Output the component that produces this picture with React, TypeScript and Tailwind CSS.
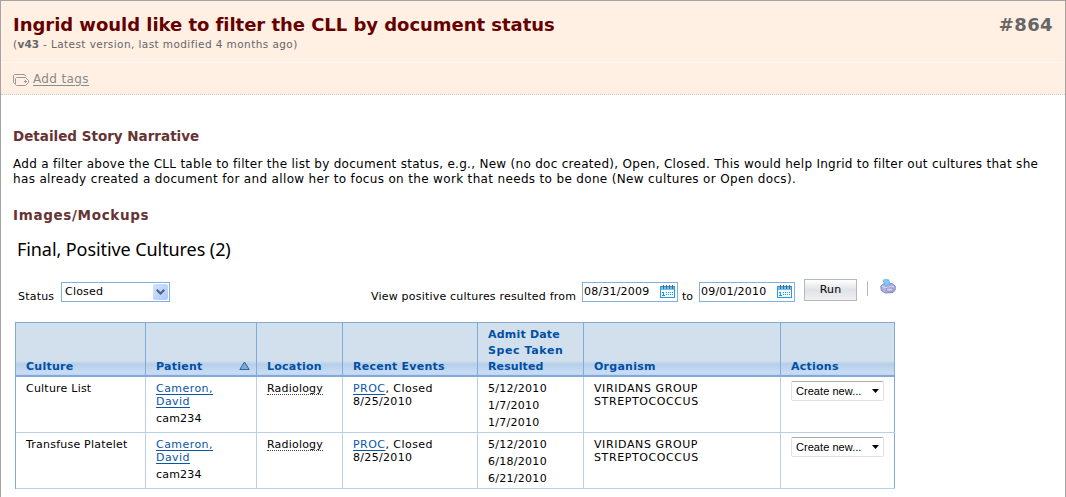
import React from "react";

const link = "tracking-[0.45px] text-[#0b55a8] underline underline-offset-2";

function TagIcon() {
  return (
    <svg width="16" height="12" viewBox="0 0 16 12" fill="none" stroke="#999" strokeWidth="1">
      <path d="M2.5 9.5h-1l-1-1v-7l1-1h10l1.5 2" />
      <path d="M3.5 3.5h9l3 3v2l-3 3h-9l-1-1v-6z" />
      <path d="M11 7.5h3M12.5 6v3" />
    </svg>
  );
}

function CalendarIcon() {
  return (
    <svg className="-mt-[2px]" width="15" height="13" viewBox="0 0 15 13" shapeRendering="crispEdges">
      <rect x="0" y="1" width="15" height="12" fill="#2f96de" />
      <rect x="1" y="2" width="13" height="3" fill="#6cc2f4" />
      <rect x="1" y="5" width="13" height="7" fill="#f2faff" />
      <path d="M3.5 0v4M6.5 0v4M9.5 0v4M12.5 0v4" stroke="#5a6470" />
      <path d="M2 7.5h2M3.5 7v4M2 10.5h3" stroke="#2693dd" />
      <path d="M6 7.5h7M6 9.5h7" stroke="#2693dd" strokeDasharray="1 1" />
    </svg>
  );
}

function PrinterIcon() {
  return (
    <svg width="16" height="15" viewBox="0 0 16 15">
      <path d="M.8 7l2.700-2.200 8.500-.3 3.200 2.500v4l-2.200 2.500-7.500.5-4.200-2.500z" fill="#b5b3e2" stroke="#7a77b3" strokeWidth=".9" />
      <path d="M3 1.500l1.500-1L8.700.800l1.500 5-4.700.900z" fill="#7fc8f8" stroke="#68a9e0" strokeWidth=".8" />
      <path d="M2 7.200l4 1.600 8-1.300" fill="none" stroke="#dddcf4" />
      <rect x="6.500" y="9" width="6.500" height="3.200" rx="1" fill="#d3d2f0" stroke="#7f7cb8" strokeWidth=".8" />
    </svg>
  );
}

function DateField({ value }: { value: string }) {
  return (
    <div className="flex h-5 w-24 items-center justify-between border border-[#7fb0e3] pr-[2px] pl-px">
      <span className="tracking-[0.2px]">{value}</span>
      <CalendarIcon />
    </div>
  );
}

const heads = ["Culture", "Patient", "Location", "Recent Events", "", "Organism", "Actions"];
const rows = [
  { culture: "Culture List", dates: ["5/12/2010", "1/7/2010", "1/7/2010"] },
  { culture: "Transfuse Platelet", dates: ["5/12/2010", "6/18/2010", "6/21/2010"] },
];
const grid = "grid grid-cols-[130px_111px_86px_135px_106px_197px_114px]";
const cell = "border-r border-[#b8d0e8] pt-[5px] pl-[10px] last:border-[#84a9d6]";

export default function App() {
  return (
    <div className="h-[497px] w-[1066px] overflow-hidden border-x border-t border-[#a5a3a3] bg-white font-['DejaVu_Sans',sans-serif] text-[11px] text-black">
      <header className="bg-[#fff0e3]">
        <div className="flex h-[61px] justify-between pt-[12px] pr-[12px] pl-[12px]">
          <div>
            <h1 className="text-[18px] leading-6 font-bold tracking-[-0.035px] whitespace-nowrap text-[#660000]">Ingrid would like to filter the CLL by document status</h1>
            <p className="mt-[1px] text-[10.5px] leading-[13px] tracking-[0.41px] whitespace-nowrap text-[#666]">(<b className="tracking-[0.1px]">v43</b> - Latest version, last modified 4 months ago)</p>
          </div>
          <span className="text-[18px] leading-6 font-bold tracking-[0.4px] text-[#666]">#864</span>
        </div>
        <div className="flex h-[33px] items-center gap-1 border-y border-dotted border-t-white border-b-[#ccc] pl-[12px] text-[12px] text-[#8a8a8a]">
          <span className="mt-[3px]"><TagIcon /></span>
          <span className="tracking-[0.37px] underline underline-offset-2">Add tags</span>
        </div>
      </header>
      <main className="px-3">
        <h2 className="mt-[32px] text-[13.5px] leading-[18px] font-bold text-[#663333]">Detailed Story Narrative</h2>
        <div className="mt-[12px] text-[12px] leading-[15px] whitespace-nowrap">
          <p className="tracking-[0.287px]">Add a filter above the CLL table to filter the list by document status, e.g., New (no doc created), Open, Closed. This would help Ingrid to filter out cultures that she</p>
          <p className="tracking-[0.338px]">has already created a document for and allow her to focus on the work that needs to be done (New cultures or Open docs).</p>
        </div>
        <h2 className="mt-[19px] text-[13.5px] leading-[18px] font-bold tracking-[0.66px] text-[#663333]">Images/Mockups</h2>
        <h3 className="mt-[13px] pl-1 font-['Noto_Sans',sans-serif] text-[18px] leading-6 tracking-[-0.08px]">Final, Positive Cultures (2)</h3>

        <div className="mt-[17px] flex h-6 items-start pl-[5px]">
          <span className="mt-[12px] w-[43px] leading-[14px] tracking-[0.2px]">Status</span>
          <div className="mt-[4px] flex h-5 w-[109px] items-center justify-between border border-[#7fb0e3] pr-px pl-[3px]">
            <span className="mt-px tracking-[0.2px]">Closed</span>
            <span className="flex h-4 w-[15px] items-center justify-center rounded-[2px] bg-linear-to-br from-[#d2e0fe] to-[#b0c8f7]">
              <svg width="9" height="6" viewBox="0 0 9 6" fill="none" stroke="#4d6185" strokeWidth="2"><path d="M.7.700l3.800 3.800L8.300.700" /></svg>
            </span>
          </div>
          <span className="mt-[12px] ml-[201px] w-[211px] leading-[14px] tracking-[0.2px] whitespace-nowrap">View positive cultures resulted from</span>
          <div className="mt-[4px]"><DateField value="08/31/2009" /></div>
          <span className="mt-[12px] ml-1 w-[17px] leading-[14px]">to</span>
          <div className="mt-[4px]"><DateField value="09/01/2010" /></div>
          <button className="mt-px ml-[9px] h-[22px] w-[53px] border border-[#b8b8b8] bg-linear-to-b from-white via-[#dfe2e8] to-[#f0f1f3] tracking-[0.2px]">Run</button>
          <span className="mt-[3px] ml-[10px] h-[15px] w-px bg-[#bbb8bd]" />
          <span className="mt-px ml-[12px]"><PrinterIcon /></span>
        </div>

        <div className="mt-[20px] ml-[2px] w-[880px] border-t border-l border-[#84a9d6] leading-[13px]">
          <div className={`${grid} h-[54px] border-b-2 border-[#84a9d6] bg-[linear-gradient(to_bottom,#d2dfec_0,#d2dfec_38px,#b6cfe9_41px,#c9dcf5_50px,#b0c8e8_54px)] font-bold text-[#004fa5]`}>
            {heads.map((h, i) => (
              <div key={i} className="flex items-end justify-between border-r border-[#84a9d6] pr-[6px] pl-[10px] leading-4">
                {i === 4 ? (
                  <span className="whitespace-nowrap">
                    <span className="tracking-[0.2px]">Admit Date</span><br />
                    <span className="tracking-[0.6px]">Spec Taken</span><br />
                    <span className="tracking-[0.1px]">Resulted</span>
                  </span>
                ) : (
                  <span className="tracking-[0.25px] whitespace-nowrap">{h}</span>
                )}
                {i === 1 && <svg className="mb-[5px]" width="11" height="9" viewBox="0 0 11 9"><path d="M5.500 1L10.200 8.500H.800z" fill="#7fa9cf" stroke="#2b66a5" /></svg>}
              </div>
            ))}
          </div>
          {rows.map((r) => (
            <div key={r.culture} className={`${grid} h-14 border-b border-[#b8d0e8]`}>
              <div className={`${cell} tracking-[0.22px]`}>{r.culture}</div>
              <div className={cell}><span className={link}>Cameron,</span><br /><span className={link}>David</span><div className="mt-1 tracking-[0.2px]">cam234</div></div>
              <div className={cell}><span className="inline-block h-[13px] border-b border-dotted border-[#444] tracking-[0.2px]">Radiology</span></div>
              <div className={cell}><span className={link}>PROC</span><span className="tracking-[0.45px]">, Closed</span><br /><span className="tracking-[0.32px]">8/25/2010</span></div>
              <div className={`${cell} leading-[17px] tracking-[0.28px]`}><div className="-mt-[2px]">{r.dates.map((d, i) => <div key={i}>{d}</div>)}</div></div>
              <div className={`${cell} tracking-[0.6px]`}>VIRIDANS GROUP<br />STREPTOCOCCUS</div>
              <div className={cell}>
                <div className="-mt-px flex h-5 w-[93px] items-center justify-between rounded-[2px] border border-[#e0e0e8] border-t-[#aaa] pr-1 pl-1 font-['Liberation_Sans',sans-serif] text-[11px] tracking-[0.05px]">
                  <span>Create new...</span>
                  <svg width="7" height="4" viewBox="0 0 7 4"><path d="M0 0h7L3.500 4z" /></svg>
                </div>
              </div>
            </div>
          ))}
        </div>
      </main>
    </div>
  );
}
